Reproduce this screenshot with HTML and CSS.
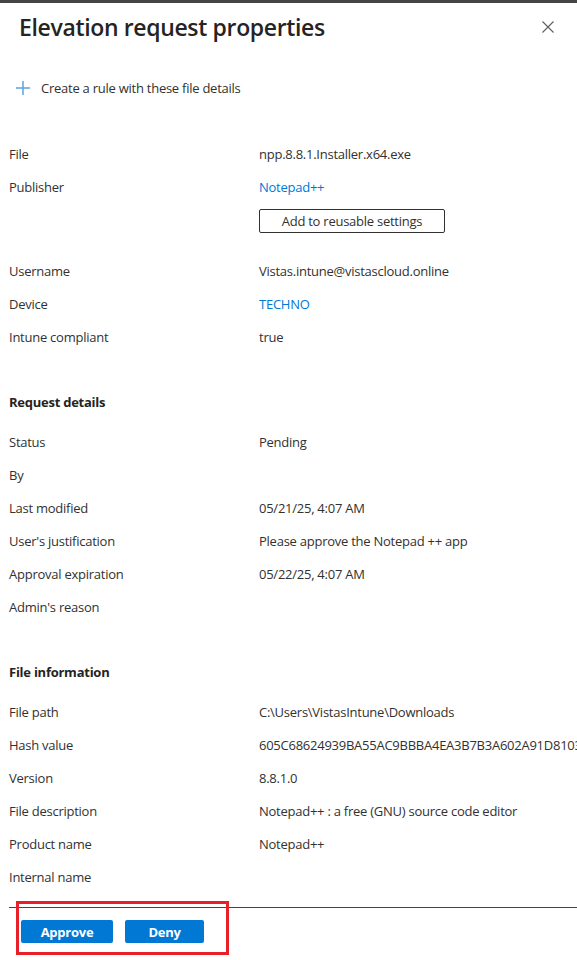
FILE: index.html
```html
<html>
  <head>
    <meta charset="UTF-8" />
    <link rel="stylesheet" href="styles.css">
  </head>
  <body>
    <div class="topbar"></div>

    <div class="panel-head">
      <h1 class="title">Elevation request properties</h1>
      <button class="close" aria-label="Close">
        <svg width="12" height="12" viewBox="0 0 12 12">
          <path d="M0.5 0.5 L11.5 11.5 M11.5 0.5 L0.5 11.5" stroke="#605e5c" stroke-width="1.1" fill="none" />
        </svg>
      </button>
    </div>

    <div class="toolbar">
      <button class="cmd">
        <svg width="14" height="14" viewBox="0 0 14 14">
          <path d="M7 0 V14 M0 7 H14" stroke="#5ea2de" stroke-width="1.5" fill="none" />
        </svg>
        <span>Create a rule with these file details</span>
      </button>
    </div>

    <div class="props">
      <div class="row"><div class="label">File</div><div class="value">npp.8.8.1.Installer.x64.exe</div></div>
      <div class="row"><div class="label">Publisher</div><div class="value"><a href="#">Notepad++</a></div></div>
      <div class="row-btn"><button class="outline">Add to reusable settings</button></div>
      <div class="row"><div class="label">Username</div><div class="value">Vistas.intune@vistascloud.online</div></div>
      <div class="row"><div class="label">Device</div><div class="value"><a href="#">TECHNO</a></div></div>
      <div class="row"><div class="label">Intune compliant</div><div class="value">true</div></div>

      <div class="section">Request details</div>
      <div class="row"><div class="label">Status</div><div class="value">Pending</div></div>
      <div class="row"><div class="label">By</div><div class="value"></div></div>
      <div class="row"><div class="label">Last modified</div><div class="value">05/21/25, 4:07 AM</div></div>
      <div class="row"><div class="label">User's justification</div><div class="value">Please approve the Notepad ++ app</div></div>
      <div class="row"><div class="label">Approval expiration</div><div class="value">05/22/25, 4:07 AM</div></div>
      <div class="row"><div class="label">Admin's reason</div><div class="value"></div></div>

      <div class="section">File information</div>
      <div class="row"><div class="label">File path</div><div class="value">C:\Users\VistasIntune\Downloads</div></div>
      <div class="row"><div class="label">Hash value</div><div class="value">605C68624939BA55AC9BBBA4EA3B7B3A602A91D81038E1F2C4D7</div></div>
      <div class="row"><div class="label">Version</div><div class="value">8.8.1.0</div></div>
      <div class="row"><div class="label">File description</div><div class="value">Notepad++ : a free (GNU) source code editor</div></div>
      <div class="row"><div class="label">Product name</div><div class="value">Notepad++</div></div>
      <div class="row"><div class="label">Internal name</div><div class="value"></div></div>
    </div>

    <div class="actions">
      <button class="primary approve">Approve</button>
      <button class="primary deny">Deny</button>
      <div class="highlight"></div>
    </div>
  </body>
</html>
```

FILE: styles.css
```css
body, html {
  margin: 0;
  padding: 0;
  background: #fff;
  color: #323130;
  font-family: "Open Sans", "Noto Sans", sans-serif;
  font-size: 13px;
  letter-spacing: -0.25px;
  overflow: hidden;
}

button {
  font-family: inherit;
  letter-spacing: inherit;
}

.topbar {
  height: 3px;
  background: #454545;
}

.panel-head {
  display: flex;
  align-items: center;
  justify-content: space-between;
  padding: 8px 23px 0 19px;
}

.title {
  margin: 0;
  font-size: 23px;
  font-weight: 600;
  line-height: 32px;
  color: #252423;
  letter-spacing: -0.35px;
}

.close {
  background: none;
  border: none;
  padding: 0;
  width: 12px;
  height: 12px;
  display: flex;
}

.toolbar {
  margin-top: 29px;
  padding-left: 16px;
}

.cmd {
  display: flex;
  align-items: center;
  gap: 11px;
  height: 32px;
  background: none;
  border: none;
  padding: 0;
  font-size: 13px;
  color: #323130;
}

.props {
  padding: 34px 0 0 9px;
}

.row {
  display: grid;
  grid-template-columns: 250px auto;
  height: 33px;
  line-height: 33px;
  white-space: nowrap;
}

.value a {
  color: #0078d4;
  text-decoration: none;
}

.row-btn {
  padding: 5px 0 22px 250px;
}

.outline {
  width: 186px;
  height: 24px;
  background: #fff;
  border: 1px solid #323130;
  border-radius: 2px;
  font-size: 13px;
  font-weight: 500;
  color: #323130;
  padding: 0;
}

.section {
  margin: 32px 0 7px 0;
  height: 33px;
  line-height: 33px;
  font-weight: 700;
  color: #252423;
}

.actions {
  position: relative;
  margin: 13px 0 0 9px;
  border-top: 1px solid #444;
  padding: 12px 0 0 12px;
  display: flex;
  gap: 12px;
}

.primary {
  height: 23px;
  background: #0078d4;
  color: #fff;
  border: none;
  border-radius: 2px;
  font-size: 13px;
  font-weight: 700;
  padding: 0;
}

.approve {
  width: 92px;
}

.deny {
  width: 79px;
}

.highlight {
  position: absolute;
  left: 7px;
  top: -7px;
  width: 207px;
  height: 48px;
  border: 3px solid #e8202a;
}
```
